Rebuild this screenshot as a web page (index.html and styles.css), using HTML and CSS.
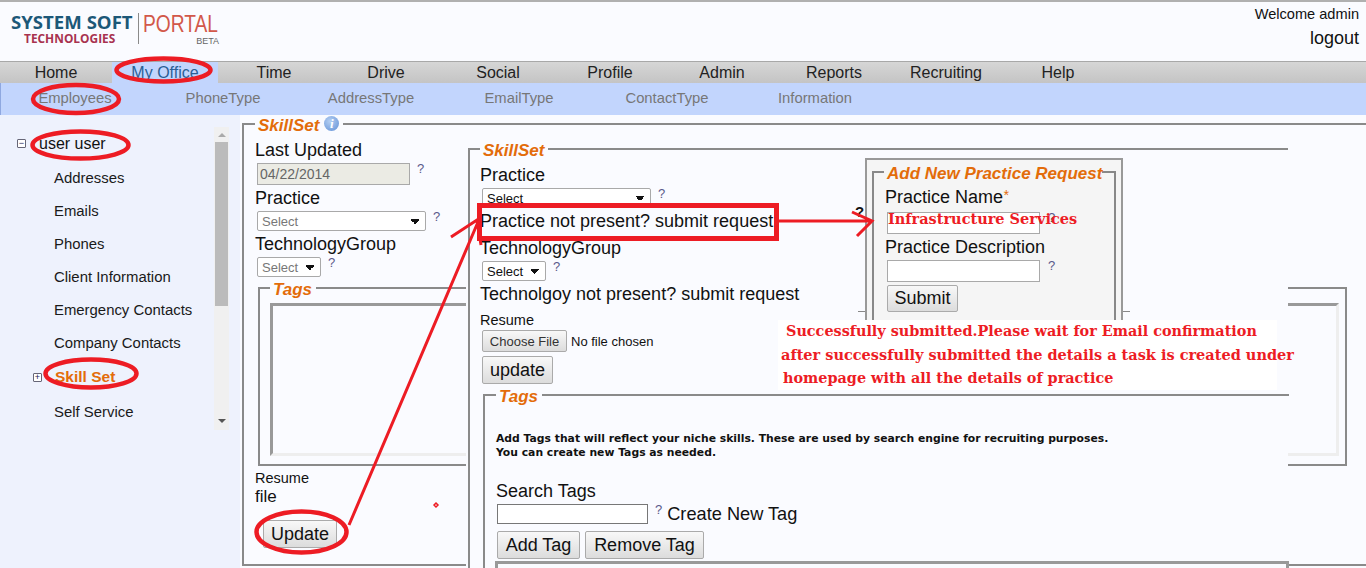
FILE: index.html
```html
<!DOCTYPE html>
<html lang="en">
<head>
  <meta charset="UTF-8">
  <title>System Soft Portal</title>
  <link rel="stylesheet" href="styles.css">
</head>
<body>
<div class="page">
  <!-- Header -->
  <div class="header">
    <div class="logo">
      <div class="logo-left">
        <div class="logo-name">SYSTEM SOFT</div>
        <div class="logo-sub">TECHNOLOGIES</div>
      </div>
      <div class="logo-right">
        <div class="logo-portal">PORTAL</div>
        <div class="logo-beta">BETA</div>
      </div>
    </div>
    <div class="user-box">
      <div class="welcome">Welcome admin</div>
      <a class="logout" href="#">logout</a>
    </div>
  </div>

  <div class="navbar">
    <a href="#">Home</a>
    <a href="#" class="active">My Office</a>
    <a href="#">Time</a>
    <a href="#">Drive</a>
    <a href="#">Social</a>
    <a href="#">Profile</a>
    <a href="#">Admin</a>
    <a href="#">Reports</a>
    <a href="#">Recruiting</a>
    <a href="#">Help</a>
  </div>
  <div class="subnav">
    <a href="#">Employees</a>
    <a href="#">PhoneType</a>
    <a href="#">AddressType</a>
    <a href="#">EmailType</a>
    <a href="#">ContactType</a>
    <a href="#">Information</a>
  </div>

  <div class="main">
    <!-- Sidebar tree -->
    <div class="sidebar">
      <div class="tree">
        <div class="tree-root"><span class="toggle">&minus;</span>user user</div>
        <a href="#">Addresses</a>
        <a href="#">Emails</a>
        <a href="#">Phones</a>
        <a href="#">Client Information</a>
        <a href="#">Emergency Contacts</a>
        <a href="#">Company Contacts</a>
        <a href="#" class="current"><span class="toggle">+</span>Skill Set</a>
        <a href="#" class="last">Self Service</a>
      </div>
      <div class="scrollbar">
        <span class="arrow-up"></span>
        <span class="thumb"></span>
        <span class="arrow-down"></span>
      </div>
    </div>

    <!-- Page behind the pasted pane -->
    <fieldset class="box skill-box">
      <legend><span>SkillSet</span><i class="info">i</i></legend>
      <label>Last Updated</label>
      <div class="row">
        <input class="input date" type="text" value="04/22/2014" disabled>
        <span class="help">?</span>
      </div>
      <label>Practice</label>
      <div class="row">
        <select class="select wide muted"><option>Select</option></select>
        <span class="help">?</span>
      </div>
      <label>TechnologyGroup</label>
      <div class="row">
        <select class="select small muted"><option>Select</option></select>
        <span class="help">?</span>
      </div>
      <fieldset class="box back-tags">
        <legend><span>Tags</span></legend>
        <div class="tag-list"></div>
      </fieldset>
      <div class="label-small">Resume</div>
      <div class="file-name">file</div>
      <button class="btn update-btn">Update</button>
    </fieldset>
  </div>

  <!-- Pasted pane -->
  <div class="pane">
    <fieldset class="box pane-box">
      <legend><span>SkillSet</span></legend>
      <label>Practice</label>
      <div class="row">
        <select class="select wide"><option>Select</option></select>
        <span class="help">?</span>
      </div>
      <label>Practice not present? submit request</label>
      <label class="gap-tech">TechnologyGroup</label>
      <div class="row">
        <select class="select small"><option>Select</option></select>
        <span class="help">?</span>
      </div>
      <label>Technolgoy not present? submit request</label>
      <div class="label-small resume">Resume</div>
      <div class="file-row">
        <button class="btn choose">Choose File</button>
        <span>No file chosen</span>
      </div>
      <button class="btn pane-update">update</button>
      <fieldset class="box pane-tags">
        <legend><span>Tags</span></legend>
        <p class="tag-note">Add Tags that will reflect your niche skills. These are used by search engine for recruiting purposes.<br>You can create new Tags as needed.</p>
        <label class="search-label">Search Tags</label>
        <div class="row search-row">
          <input class="input search" type="text">
          <span class="help">?</span>
          <a href="#" class="create">Create New Tag</a>
        </div>
        <div class="tag-btns">
          <button class="btn">Add Tag</button>
          <button class="btn">Remove Tag</button>
        </div>
        <div class="tag-results"></div>
      </fieldset>
    </fieldset>
  </div>

  <!-- Request dialog -->
  <span class="stray-line"></span>
  <span class="stray-help">?</span>
  <div class="dialog">
    <fieldset class="box dialog-box">
      <legend><span>Add New Practice Request</span></legend>
      <label>Practice Name<em>*</em></label>
      <div class="row">
        <input class="input dialog-input" type="text">
        <span class="help">?</span>
      </div>
      <label>Practice Description</label>
      <div class="row tight">
        <input class="input dialog-input" type="text">
        <span class="help">?</span>
      </div>
      <button class="btn submit">Submit</button>
    </fieldset>
  </div>

  <!-- Annotations -->
  <div class="note-name">Infrastructure Services</div>
  <div class="note">
    <div class="line-1">Successfully submitted.Please wait for Email confirmation</div>
    <div class="line-2">after successfully submitted the details a task is created under</div>
    <div class="line-3">homepage with all the details of practice</div>
  </div>
  <svg class="marks" width="1366" height="568" viewBox="0 0 1366 568" fill="none" stroke="#ed1c24" stroke-width="4.5">
    <ellipse cx="163.5" cy="70" rx="47" ry="11.5"/>
    <ellipse cx="76" cy="99" rx="43" ry="14"/>
    <ellipse cx="80.5" cy="145" rx="48" ry="13.5"/>
    <ellipse cx="91" cy="373.5" rx="45.5" ry="14"/>
    <ellipse cx="301.5" cy="532" rx="45" ry="20.5"/>
    <rect x="479.5" y="205.5" width="297" height="33" stroke-width="5"/>
    <path d="M349 525L478 222M451 237L477 220L481 245" stroke-width="3"/>
    <path d="M779 221H871M852 212L872 221L857 236" stroke-width="3"/>
    <path d="M434 505L436 503L438 505L436 507Z" stroke-width="1.5"/>
  </svg>
</div>
</body>
</html>
```

FILE: styles.css
```css
html, body {
    margin: 0;
    padding: 0;
    height: 568px;
    overflow: hidden;
}
body {
    font-family: "Liberation Sans", Arial, sans-serif;
    background-color: #fafbff;
    color: #111;
}
a {
    color: inherit;
    text-decoration: none;
}
.page {
    position: relative;
    width: 1366px;
    height: 568px;
    overflow: hidden;
}

/* Header */
.header {
    height: 59px;
    border-top: 2px solid #b0b0b0;
    display: flex;
    justify-content: space-between;
}
.logo {
    display: flex;
    padding: 11px 0 0 11px;
}
.logo-left {
    width: 127px;
    border-right: 1px solid #8a8a8a;
    height: 31px;
}
.logo-name {
    font-family: "Open Sans", sans-serif;
    font-weight: 700;
    font-size: 18.6px;
    line-height: 18px;
    color: #1c5878;
    white-space: nowrap;
}
.logo-sub {
    padding-left: 13px;
    font-family: "Open Sans", sans-serif;
    font-weight: 700;
    font-size: 11.9px;
    line-height: 14px;
    color: #a8324f;
    white-space: nowrap;
}
.logo-right {
    padding-left: 4px;
    width: 76px;
}
.logo-portal {
    font-size: 24px;
    line-height: 22px;
    color: #d2584a;
    transform: scaleX(0.8);
    transform-origin: left;
}
.logo-beta {
    font-size: 9px;
    line-height: 10px;
    color: #666;
    text-align: right;
    margin-top: 1px;
}
.user-box {
    text-align: right;
    padding: 4px 7px 0 0;
}
.welcome {
    font-size: 14.6px;
    line-height: 17px;
}
.logout {
    display: block;
    margin-top: 5px;
    font-size: 18px;
    line-height: 20px;
}

/* Menus */
.navbar {
    height: 21px;
    border-top: 1px solid #a8a8a8;
    background: linear-gradient(#d6d6d6, #c4c4c4);
    display: flex;
}
.navbar a {
    width: 112px;
    text-align: center;
    font-size: 16px;
    line-height: 21px;
    color: #222;
}
.navbar a.active {
    width: 106px;
    background-color: #c2d5fd;
    color: #2a5f96;
}
.subnav {
    height: 32px;
    background-color: #c2d5fd;
    border-left: 1px solid #8fa8e0;
    display: flex;
}
.subnav a {
    width: 148px;
    text-align: center;
    font-size: 14.8px;
    line-height: 31px;
    color: #777;
}

/* Layout */
.main {
    display: flex;
    height: 453px;
}
.sidebar {
    flex: none;
    width: 240px;
    margin-right: 2px;
    background-color: #eef2fd;
    display: flex;
    align-items: flex-start;
    padding-top: 12px;
    box-sizing: border-box;
}
.tree {
    width: 214px;
    font-size: 14.9px;
}
.tree a {
    display: block;
    height: 33px;
    line-height: 33px;
    padding-left: 54px;
    color: #1a1a1a;
}
.tree-root {
    font-size: 16px;
    line-height: 33px;
    height: 35px;
    padding-left: 39px;
    position: relative;
}
.toggle {
    position: absolute;
    width: 7px;
    height: 7px;
    border: 1px solid #667;
    border-radius: 1px;
    font-size: 9px;
    font-weight: normal;
    line-height: 7px;
    text-align: center;
    color: #225;
    background-color: #fff;
}
.tree-root .toggle {
    left: 17px;
    top: 12px;
}
.tree a.current {
    position: relative;
    font-size: 15.5px;
    font-weight: bold;
    color: #e36c0a;
    padding-left: 55px;
}
.tree a.current .toggle {
    left: 33px;
    top: 13px;
}
.tree a.last {
    margin-top: 3px;
}
.scrollbar {
    width: 15px;
    height: 303px;
    background-color: #f0f0f0;
    position: relative;
}
.thumb {
    position: absolute;
    left: 1px;
    top: 15px;
    width: 13px;
    height: 164px;
    background-color: #bbb;
}
.arrow-up, .arrow-down {
    position: absolute;
    left: 4px;
    border-left: 4px solid transparent;
    border-right: 4px solid transparent;
}
.arrow-up {
    top: 6px;
    border-bottom: 4px solid #aaa;
}
.arrow-down {
    bottom: 7px;
    border-top: 4px solid #555;
}

/* Fieldsets */
.box {
    margin: 0;
    min-width: 0;
    border: 2px solid #8a8a8a;
    box-sizing: border-box;
}
legend {
    height: 18px;
    padding: 0 4px 0 3px;
    font-size: 17px;
    line-height: 22px;
    font-weight: bold;
    font-style: italic;
    color: #e36c0a;
    display: flex;
    align-items: flex-start;
}
.info {
    width: 15px;
    height: 15px;
    margin: 1px 0 0 5px;
    border-radius: 50%;
    background: radial-gradient(circle at 40% 35%, #b5cff2, #5f8fd6);
    color: #fff;
    font-family: "Liberation Serif", serif;
    font-size: 13px;
    line-height: 15px;
    text-align: center;
}
label {
    display: block;
    font-size: 18px;
    line-height: 22px;
    color: #111;
    white-space: nowrap;
}
.row {
    display: flex;
    align-items: flex-start;
    margin: 2px 0 2px 2px;
}
.help {
    font-size: 13px;
    line-height: 12px;
    color: #5a5a8a;
    margin-left: 7px;
}
.input {
    box-sizing: border-box;
    height: 22px;
    margin: 0;
    padding: 0 2px;
    border: 1px solid #a9a9a9;
    background-color: #fff;
    font-family: inherit;
}
.select {
    box-sizing: border-box;
    appearance: none;
    height: 20px;
    margin: 0;
    padding: 0 0 0 4px;
    border: 1px solid #a9a9a9;
    border-radius: 2px;
    font-family: inherit;
    font-size: 13px;
    color: #111;
    background:
        linear-gradient(45deg, transparent 50%, #111 50%) no-repeat right 10px top 7px / 4px 6px,
        linear-gradient(-45deg, transparent 50%, #111 50%) no-repeat right 6px top 7px / 4px 6px,
        #fff;
}
.select.muted {
    color: #777;
}
.select.wide {
    width: 169px;
}
.select.small {
    width: 64px;
}
.btn {
    box-sizing: border-box;
    height: 28px;
    margin: 0;
    padding: 0;
    border: 1px solid #aaa;
    border-radius: 2px;
    background: linear-gradient(#f8f8f8, #dcdcdc);
    font-family: inherit;
    font-size: 18px;
    color: #111;
    white-space: nowrap;
}

/* Back page */
.skill-box {
    flex: none;
    width: 1130px;
    height: 451px;
    padding: 6px 0 0 11px;
}
.skill-box > legend {
    margin-left: 0;
}
.date {
    width: 153px;
    background-color: #ebebe4;
    font-size: 14px;
    color: #666;
}
.back-tags {
    width: 1089px;
    height: 187px;
    margin: 0 0 0 3px;
    padding: 6px 0 0 10px;
}
.tag-list {
    width: 1069px;
    height: 153px;
    box-sizing: border-box;
    border: 3px solid #999;
    border-right-color: #eee;
    border-bottom-color: #eee;
}
.label-small {
    font-size: 14.5px;
    line-height: 18px;
    margin-top: 3px;
}
.file-name {
    font-size: 17px;
    line-height: 19px;
}
.update-btn {
    display: block;
    width: 74px;
    margin: 14px 0 0 8px;
}

/* Pasted pane */
.pane {
    position: absolute;
    left: 466px;
    top: 140px;
    width: 822px;
    height: 428px;
    background-color: #fafbff;
}
.pane-box {
    margin-left: 2px;
    width: 820px;
    height: 440px;
    padding: 6px 0 0 10px;
    border-right: none;
    border-bottom: none;
}
.gap-tech {
    margin-top: 5px;
}
.resume {
    margin-top: 6px;
}
.file-row {
    display: flex;
    align-items: center;
    gap: 4px;
    margin: 1px 0 0 2px;
    font-size: 13px;
}
.choose {
    width: 85px;
    height: 22px;
    font-size: 13px;
    color: #333;
}
.pane-update {
    display: block;
    width: 71px;
    margin: 4px 0 2px 2px;
}
.pane-tags {
    width: 806px;
    margin: 0 0 0 3px;
    padding: 0 0 0 11px;
    height: 200px;
    border-right: none;
    border-bottom: none;
}
.tag-note {
    margin: 28px 0 0 0;
    font-family: "DejaVu Sans", sans-serif;
    font-size: 10.8px;
    line-height: 14px;
    font-weight: bold;
    color: #111;
}
.search-label {
    margin-top: 20px;
}
.search-row {
    margin: 2px 0 0 1px;
}
.search {
    width: 151px;
    height: 20px;
    border-color: #777;
}
.create {
    font-size: 18.2px;
    line-height: 20px;
    margin-left: 5px;
}
.tag-btns {
    display: flex;
    gap: 5px;
    margin: 7px 0 0 1px;
}
.tag-btns .btn:first-child {
    width: 83px;
}
.tag-btns .btn:last-child {
    width: 119px;
}
.tag-results {
    height: 10px;
    margin: 2px 0 0 -1px;
    border: 3px solid #999;
}

/* Dialog */
.stray-line {
    position: absolute;
    left: 858px;
    top: 311px;
    width: 272px;
    height: 1px;
    background-color: #888;
}
.stray-help {
    position: absolute;
    left: 855px;
    top: 203px;
    font-size: 15px;
    font-weight: bold;
}
.dialog {
    position: absolute;
    left: 865px;
    top: 158px;
    width: 258px;
    height: 164px;
    box-sizing: border-box;
    border: 2px solid #999;
    background-color: #f5f5f5;
    padding: 3px 5px 0 5px;
    overflow: hidden;
}
.dialog-box {
    height: 180px;
    padding: 3px 0 0 11px;
    border-color: #888;
}
.dialog-box legend {
    margin-left: -1px;
    padding: 0 0 0 3px;
    white-space: nowrap;
}
.dialog-box .row {
    margin: 4px 0 2px 2px;
}
.dialog-box .row.tight {
    margin-top: 2px;
}
.dialog-box em {
    color: #e36c0a;
    font-size: 14px;
    vertical-align: 3px;
}
.dialog-input {
    width: 153px;
}
.dialog-box .help {
    margin-left: 8px;
}
.submit {
    display: block;
    width: 71px;
    height: 27px;
    margin: 3px 0 0 2px;
}

/* Annotations */
.marks {
    position: absolute;
    left: 0;
    top: 0;
    pointer-events: none;
}
.note-name {
    position: absolute;
    left: 888px;
    top: 209px;
    font-family: "DejaVu Serif", serif;
    font-weight: bold;
    font-size: 14.5px;
    line-height: 20px;
    color: #ed1c24;
    white-space: nowrap;
}
.note {
    position: absolute;
    left: 778px;
    top: 320px;
    width: 499px;
    height: 70px;
    background-color: #fff;
    font-family: "DejaVu Serif", serif;
    font-weight: bold;
    font-size: 14.4px;
    color: #ed1c24;
    white-space: nowrap;
}
.line-1 {
    position: absolute;
    left: 8px;
    top: 1px;
    line-height: 20px;
}
.line-2 {
    position: absolute;
    left: 3px;
    top: 25px;
    line-height: 20px;
    font-size: 14.5px;
}
.line-3 {
    position: absolute;
    left: 5px;
    top: 48px;
    line-height: 20px;
}
```
